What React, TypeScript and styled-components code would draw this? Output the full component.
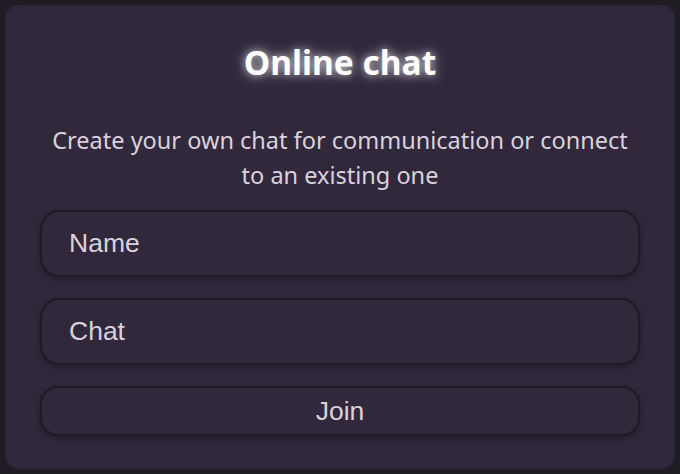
import { createGlobalStyle } from "styled-components";
import styled from "styled-components";

const GlobalStyle = createGlobalStyle`
  html, body {
    margin: 0;
    padding: 0;
    background: #1f1c23;
  }
  body {
    width: 680px;
    height: 474px;
    overflow: hidden;
  }
`;

const Card = styled.div`
  box-sizing: border-box;
  margin: 3px;
  width: 674px;
  height: 468px;
  background: #31283c;
  border: 1px solid #1c1a1f;
  border-radius: 16px;
  box-shadow: inset 0 0 3px rgba(0, 0, 0, 0.6);
  padding: 35px 36px 34px;
  display: flex;
  flex-direction: column;
  align-items: stretch;
  font-family: "Noto Sans", "Open Sans", sans-serif;
`;

const Title = styled.h1`
  margin: 0;
  text-align: center;
  font-size: 33.5px;
  font-weight: 700;
  line-height: 46px;
  color: #ffffff;
  text-shadow: 0 0 8px rgba(255, 255, 255, 0.7), 0 0 16px rgba(255, 255, 255, 0.35);
`;

const Description = styled.p`
  margin: 38px 6px 17px;
  text-align: center;
  font-size: 23.5px;
  line-height: 35px;
  color: #d9d2dd;
`;

const Form = styled.form`
  display: flex;
  flex-direction: column;
  gap: 21px;
`;

const Field = styled.input`
  box-sizing: border-box;
  width: 100%;
  height: 67px;
  padding: 0 27px;
  border: 2px solid #1e1b22;
  border-radius: 20px;
  background: #31283c;
  box-shadow: 0 2px 6px rgba(0, 0, 0, 0.35);
  font-family: "Liberation Sans", Arial, sans-serif;
  font-size: 26.5px;
  color: #d9d2dd;
  outline: none;
  &::placeholder {
    color: #d9d2dd;
  }
`;

const JoinButton = styled.button`
  box-sizing: border-box;
  width: 100%;
  height: 50px;
  border: 2px solid #1e1b22;
  border-radius: 18px;
  background: #31283c;
  box-shadow: 0 2px 6px rgba(0, 0, 0, 0.35);
  font-family: "Liberation Sans", Arial, sans-serif;
  font-size: 26.5px;
  color: #d9d2dd;
  cursor: pointer;
`;

export default function App() {
  return (
    <>
      <GlobalStyle />
      <Card>
        <Title>Online chat</Title>
        <Description>
          Create your own chat for communication or connect to an existing one
        </Description>
        <Form onSubmit={(e) => e.preventDefault()}>
          <Field placeholder="Name" />
          <Field placeholder="Chat" />
          <JoinButton type="submit">Join</JoinButton>
        </Form>
      </Card>
    </>
  );
}
